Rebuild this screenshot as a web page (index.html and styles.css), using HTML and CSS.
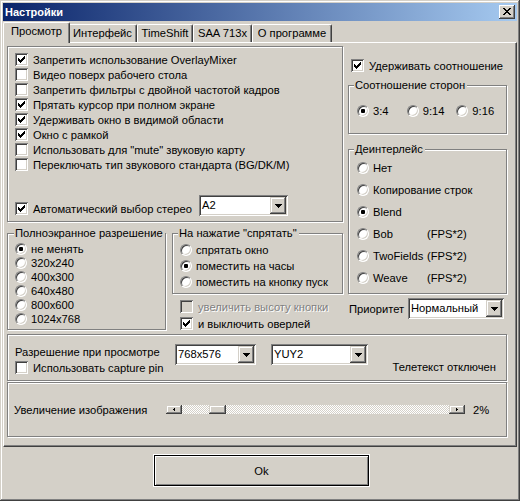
FILE: index.html
```html
<!DOCTYPE html>
<html>
<head>
<meta charset="utf-8">
<title>Настройки</title>
<link rel="stylesheet" href="styles.css">
</head>
<body>
<div class="win">
  <div class="titlebar">
    <span class="title">Настройки</span>
    <span class="closebtn"><svg width="8" height="7" viewBox="0 0 8 7" shape-rendering="crispEdges"><path d="M0 0h2v1h-2z M6 0h2v1h-2z M1 1h2v1h-2z M5 1h2v1h-2z M2 2h4v1h-4z M3 3h2v1h-2z M2 4h4v1h-4z M1 5h2v1h-2z M5 5h2v1h-2z M0 6h2v1h-2z M6 6h2v1h-2z"/></svg></span>
  </div>
  <div class="tabs">
    <div class="tab sel t1">Просмотр</div>
    <div class="tab t2">Интерфейс</div>
    <div class="tab t3">TimeShift</div>
    <div class="tab t4">SAA 713x</div>
    <div class="tab t5">О программе</div>
  </div>
  <div class="panel">
    <div class="top">
      <div class="lcol">
        <div class="group g-main">
          <div class="row"><span class="cb"><svg width="7" height="7" viewBox="0 0 7 7" shape-rendering="crispEdges"><path d="M6 0h1v1h-1z M5 1h2v1h-2z M0 2h1v1h-1z M4 2h3v1h-3z M0 3h2v1h-2z M3 3h3v1h-3z M0 4h5v1h-5z M1 5h3v1h-3z M2 6h1v1h-1z"/></svg></span><span>Запретить использование OverlayMixer</span></div>
          <div class="row"><span class="cb"></span><span>Видео поверх рабочего стола</span></div>
          <div class="row"><span class="cb"></span><span>Запретить фильтры с двойной частотой кадров</span></div>
          <div class="row"><span class="cb"><svg width="7" height="7" viewBox="0 0 7 7" shape-rendering="crispEdges"><path d="M6 0h1v1h-1z M5 1h2v1h-2z M0 2h1v1h-1z M4 2h3v1h-3z M0 3h2v1h-2z M3 3h3v1h-3z M0 4h5v1h-5z M1 5h3v1h-3z M2 6h1v1h-1z"/></svg></span><span>Прятать курсор при полном экране</span></div>
          <div class="row"><span class="cb"><svg width="7" height="7" viewBox="0 0 7 7" shape-rendering="crispEdges"><path d="M6 0h1v1h-1z M5 1h2v1h-2z M0 2h1v1h-1z M4 2h3v1h-3z M0 3h2v1h-2z M3 3h3v1h-3z M0 4h5v1h-5z M1 5h3v1h-3z M2 6h1v1h-1z"/></svg></span><span>Удерживать окно в видимой области</span></div>
          <div class="row"><span class="cb"><svg width="7" height="7" viewBox="0 0 7 7" shape-rendering="crispEdges"><path d="M6 0h1v1h-1z M5 1h2v1h-2z M0 2h1v1h-1z M4 2h3v1h-3z M0 3h2v1h-2z M3 3h3v1h-3z M0 4h5v1h-5z M1 5h3v1h-3z M2 6h1v1h-1z"/></svg></span><span>Окно с рамкой</span></div>
          <div class="row"><span class="cb"></span><span>Использовать для "mute" звуковую карту</span></div>
          <div class="row"><span class="cb"></span><span>Переключать тип звукового стандарта (BG/DK/M)</span></div>
          <div class="stereo">
            <div class="row st-lbl"><span class="cb"><svg width="7" height="7" viewBox="0 0 7 7" shape-rendering="crispEdges"><path d="M6 0h1v1h-1z M5 1h2v1h-2z M0 2h1v1h-1z M4 2h3v1h-3z M0 3h2v1h-2z M3 3h3v1h-3z M0 4h5v1h-5z M1 5h3v1h-3z M2 6h1v1h-1z"/></svg></span><span>Автоматический выбор стерео</span></div>
            <div class="combo c-a2"><span class="ct">A2</span><span class="dd"><svg width="7" height="4" viewBox="0 0 7 4" shape-rendering="crispEdges"><path d="M0 0h7v1h-7z M1 1h5v1h-5z M2 2h3v1h-3z M3 3h1v1h-1z"/></svg></span></div>
          </div>
        </div>
        <div class="lower">
          <div class="group g-full">
            <span class="legend lg8">Полноэкранное разрешение</span>
            <div class="rrow"><span class="rb on"></span><span>не менять</span></div>
            <div class="rrow"><span class="rb"></span><span>320x240</span></div>
            <div class="rrow"><span class="rb"></span><span>400x300</span></div>
            <div class="rrow"><span class="rb"></span><span>640x480</span></div>
            <div class="rrow"><span class="rb"></span><span>800x600</span></div>
            <div class="rrow"><span class="rb"></span><span>1024x768</span></div>
          </div>
          <div class="subcol">
            <div class="group g-hide">
              <span class="legend">На нажатие "спрятать"</span>
              <div class="rrow h16"><span class="rb"></span><span>спрятать окно</span></div>
              <div class="rrow h16"><span class="rb on"></span><span>поместить на часы</span></div>
              <div class="rrow h16"><span class="rb"></span><span>поместить на кнопку пуск</span></div>
            </div>
            <div class="row sub-row first dis"><span class="cb off"></span><span>увеличить высоту кнопки</span></div>
            <div class="row sub-row"><span class="cb"><svg width="7" height="7" viewBox="0 0 7 7" shape-rendering="crispEdges"><path d="M6 0h1v1h-1z M5 1h2v1h-2z M0 2h1v1h-1z M4 2h3v1h-3z M0 3h2v1h-2z M3 3h3v1h-3z M0 4h5v1h-5z M1 5h3v1h-3z M2 6h1v1h-1z"/></svg></span><span>и выключить оверлей</span></div>
          </div>
        </div>
      </div>
      <div class="rcol">
        <div class="row keep"><span class="cb"><svg width="7" height="7" viewBox="0 0 7 7" shape-rendering="crispEdges"><path d="M6 0h1v1h-1z M5 1h2v1h-2z M0 2h1v1h-1z M4 2h3v1h-3z M0 3h2v1h-2z M3 3h3v1h-3z M0 4h5v1h-5z M1 5h3v1h-3z M2 6h1v1h-1z"/></svg></span><span>Удерживать соотношение</span></div>
        <div class="group g-aspect">
          <span class="legend">Соотношение сторон</span>
          <div class="hrow">
            <div class="rrow hitem"><span class="rb on"></span><span>3:4</span></div>
            <div class="rrow hitem"><span class="rb"></span><span>9:14</span></div>
            <div class="rrow hitem"><span class="rb"></span><span>9:16</span></div>
          </div>
        </div>
        <div class="group g-deint">
          <span class="legend">Деинтерлейс</span>
          <div class="rrow h22"><span class="rb"></span><span>Нет</span></div>
          <div class="rrow h22"><span class="rb"></span><span>Копирование строк</span></div>
          <div class="rrow h22"><span class="rb on"></span><span>Blend</span></div>
          <div class="rrow h22"><span class="rb"></span><span class="nm">Bob</span><span>(FPS*2)</span></div>
          <div class="rrow h22"><span class="rb"></span><span class="nm">TwoFields</span><span>(FPS*2)</span></div>
          <div class="rrow h22"><span class="rb"></span><span class="nm">Weave</span><span>(FPS*2)</span></div>
        </div>
        <div class="prio">
          <span class="prio-lbl">Приоритет</span>
          <div class="combo c-prio"><span class="ct">Нормальный</span><span class="dd"><svg width="7" height="4" viewBox="0 0 7 4" shape-rendering="crispEdges"><path d="M0 0h7v1h-7z M1 1h5v1h-5z M2 2h3v1h-3z M3 3h1v1h-1z"/></svg></span></div>
        </div>
      </div>
    </div>
    <div class="group g-res">
      <div class="rescol">
        <div class="line">Разрешение при просмотре</div>
        <div class="row"><span class="cb"></span><span>Использовать capture pin</span></div>
      </div>
      <div class="combo c-res"><span class="ct">768x576</span><span class="dd"><svg width="7" height="4" viewBox="0 0 7 4" shape-rendering="crispEdges"><path d="M0 0h7v1h-7z M1 1h5v1h-5z M2 2h3v1h-3z M3 3h1v1h-1z"/></svg></span></div>
      <div class="combo c-fmt"><span class="ct">YUY2</span><span class="dd"><svg width="7" height="4" viewBox="0 0 7 4" shape-rendering="crispEdges"><path d="M0 0h7v1h-7z M1 1h5v1h-5z M2 2h3v1h-3z M3 3h1v1h-1z"/></svg></span></div>
      <div class="line teletext">Телетекст отключен</div>
    </div>
    <div class="group g-zoom">
      <div class="zrow">
        <span class="zlbl">Увеличение изображения</span>
        <div class="sb">
          <span class="sbbtn"><svg width="2" height="3" viewBox="0 0 2 3" shape-rendering="crispEdges"><path d="M1 0h1v3h-1z M0 1h1v1h-1z"/></svg></span>
          <span class="sbtrack"><span class="thumb"></span></span>
          <span class="sbbtn"><svg width="2" height="3" viewBox="0 0 2 3" shape-rendering="crispEdges"><path d="M0 0h1v3h-1z M1 1h1v1h-1z"/></svg></span>
        </div>
        <span class="pct">2%</span>
      </div>
    </div>
  </div>
  <div class="btnrow"><button class="okbtn">Ok</button></div>
</div>
</body>
</html>
```
FILE: styles.css
```css
html, body {
  margin: 0;
  padding: 0;
  background: #d4d0c8;
}
body {
  font-family: "Liberation Sans", Arial, sans-serif;
  font-size: 11.2px;
  color: #000;
}
.win {
  width: 520px;
  height: 501px;
  box-sizing: border-box;
  padding: 3px;
  background: #d4d0c8;
  box-shadow: inset -1px -1px 0 #404040, inset 1px 1px 0 #d4d0c8, inset -2px -2px 0 #808080, inset 2px 2px 0 #fff;
}
.titlebar {
  height: 18px;
  display: flex;
  align-items: center;
  justify-content: space-between;
  padding: 0 2px 0 2px;
  background: linear-gradient(to right, #0a246a, #a6caf0);
}
.title {
  color: #fff;
  font-weight: bold;
  font-size: 11px;
}
.closebtn {
  width: 16px;
  height: 14px;
  box-sizing: border-box;
  display: flex;
  align-items: center;
  justify-content: center;
  padding: 0 1px 1px 0;
  background: #d4d0c8;
  box-shadow: inset -1px -1px 0 #404040, inset 1px 1px 0 #fff, inset -2px -2px 0 #808080;
}
.tabs {
  display: flex;
  align-items: flex-end;
  height: 20px;
  margin-top: 1px;
  padding-left: 2px;
}
.tab {
  box-sizing: border-box;
  height: 18px;
  line-height: 16px;
  text-align: center;
  border-left: 1px solid #fff;
  border-top: 1px solid #fff;
  border-right: 1px solid #404040;
  border-radius: 2px 2px 0 0;
  box-shadow: inset -1px 0 0 #808080;
  background: #d4d0c8;
  white-space: nowrap;
}
.t1 { width: 63px; }
.t2 { width: 69px; }
.t3 { width: 56px; }
.t4 { width: 59px; }
.t5 { width: 80px; }
.tab.sel {
  width: 67px;
  height: 21px;
  line-height: 17px;
  margin: 0 -2px -1px -2px;
  position: relative;
  z-index: 2;
}
.panel {
  height: 405px;
  box-sizing: border-box;
  border-left: 1px solid #fff;
  border-top: 1px solid #fff;
  border-right: 1px solid #404040;
  border-bottom: 1px solid #404040;
  box-shadow: inset -1px -1px 0 #808080;
  padding: 3px 0 0 3px;
}
.top {
  display: flex;
  gap: 5px;
  height: 288px;
}
.lcol { width: 336px; }
.rcol { width: 159px; }
.group {
  position: relative;
  box-sizing: border-box;
  border: 1px solid #808080;
  box-shadow: inset 1px 1px 0 #fff, 1px 1px 0 #fff;
}
.legend {
  position: absolute;
  top: -8px;
  left: 5px;
  line-height: 14px;
  padding: 0 2px 0 1px;
  background: #d4d0c8;
  white-space: nowrap;
}
.legend.lg8 { left: 6px; }
.row {
  display: flex;
  align-items: center;
  height: 15px;
  white-space: nowrap;
}
.cb {
  flex: none;
  width: 13px;
  height: 13px;
  box-sizing: border-box;
  margin-right: 5px;
  display: flex;
  align-items: center;
  justify-content: center;
  background: #fff;
  box-shadow: inset 1px 1px 0 #808080, inset -1px -1px 0 #fff, inset 2px 2px 0 #404040, inset -2px -2px 0 #d4d0c8;
}
.cb.off { background: #d4d0c8; }
.dis { color: #808080; text-shadow: 1px 1px 0 #fff; }
.rrow {
  display: flex;
  align-items: center;
  height: 14px;
  white-space: nowrap;
}
.h16 { height: 16px; }
.h22 { height: 22px; }
.rb {
  flex: none;
  width: 12px;
  height: 12px;
  box-sizing: border-box;
  margin-right: 4px;
  border-radius: 50%;
  border: 1px solid;
  border-color: #808080 #fff #fff #808080;
  box-shadow: inset 1px 1px 0 #404040, inset -1px -1px 0 #d4d0c8;
  background: #fff;
  display: flex;
  align-items: center;
  justify-content: center;
}
.rb.on::after {
  content: "";
  width: 4px;
  height: 4px;
  border-radius: 1px;
  background: #000;
}
.g-main {
  height: 176px;
  padding: 5px 0 0 7px;
}
.stereo {
  display: flex;
  align-items: flex-start;
  margin-top: 23px;
}
.st-lbl {
  width: 184px;
  margin-top: 6px;
}
.combo {
  flex: none;
  display: flex;
  height: 21px;
  box-sizing: border-box;
  padding: 2px;
  background: #fff;
  box-shadow: inset 1px 1px 0 #808080, inset -1px -1px 0 #fff, inset 2px 2px 0 #404040, inset -2px -2px 0 #d4d0c8;
}
.combo .ct {
  flex: 1;
  padding-left: 1px;
  line-height: 17px;
  white-space: nowrap;
  overflow: hidden;
}
.combo .dd {
  flex: none;
  width: 16px;
  height: 17px;
  display: flex;
  align-items: center;
  justify-content: center;
  background: #d4d0c8;
  box-shadow: inset -1px -1px 0 #404040, inset 1px 1px 0 #d4d0c8, inset -2px -2px 0 #808080, inset 2px 2px 0 #fff;
}
.c-a2 { width: 89px; }
.c-prio { width: 96px; margin-left: auto; margin-right: 3px; }
.c-res { width: 81px; }
.c-fmt { width: 97px; margin-left: 15px; }
.lower {
  display: flex;
  gap: 6px;
  margin-top: 11px;
}
.g-full {
  width: 159px;
  height: 97px;
  padding: 8px 0 0 7px;
}
.subcol { width: 171px; }
.g-hide {
  height: 61px;
  padding: 8px 0 0 7px;
}
.sub-row {
  height: 17px;
  margin-left: 8px;
}
.sub-row.first { margin-top: 4px; }
.keep {
  margin: 12px 0 0 3px;
}
.g-aspect {
  margin-top: 12px;
  height: 49px;
  padding: 18px 0 0 8px;
}
.hrow { display: flex; }
.hitem { width: 50px; }
.g-deint {
  margin-top: 15px;
  height: 145px;
  padding: 7px 0 0 8px;
}
.nm { width: 54px; }
.prio {
  display: flex;
  align-items: center;
  margin-top: 4px;
  height: 21px;
}
.prio-lbl { padding-left: 1px; }
.g-res {
  width: 500px;
  height: 47px;
  display: flex;
  align-items: flex-start;
  padding: 9px 10px 0 7px;
}
.rescol {
  width: 160px;
  padding-top: 1px;
}
.line {
  line-height: 15px;
  white-space: nowrap;
}
.teletext {
  margin-left: auto;
  margin-top: 16px;
}
.g-zoom {
  width: 500px;
  height: 55px;
  margin-top: 1px;
  padding: 19px 0 0 6px;
}
.zrow {
  display: flex;
  align-items: center;
  height: 15px;
}
.zlbl {
  width: 152px;
  white-space: nowrap;
}
.sb {
  display: flex;
  width: 299px;
  height: 9px;
}
.sbbtn {
  flex: none;
  width: 16px;
  height: 9px;
  display: flex;
  align-items: center;
  justify-content: center;
  background: #d4d0c8;
  box-shadow: inset -1px -1px 0 #404040, inset 1px 1px 0 #d4d0c8, inset -2px -2px 0 #808080, inset 2px 2px 0 #fff;
}
.sbtrack {
  flex: 1;
  display: flex;
  background-color: #fff;
  background-image: repeating-conic-gradient(#d4d0c8 0 25%, #fff 0 50%);
  background-size: 2px 2px;
}
.thumb {
  width: 17px;
  height: 9px;
  margin-left: 27px;
  background: #d4d0c8;
  box-shadow: inset -1px -1px 0 #404040, inset 1px 1px 0 #d4d0c8, inset -2px -2px 0 #808080, inset 2px 2px 0 #fff;
}
.pct {
  margin-left: 8px;
}
.btnrow {
  padding: 8px 0 0 151px;
}
.okbtn {
  display: block;
  width: 215px;
  height: 31px;
  box-sizing: border-box;
  margin: 0;
  padding: 0;
  font-family: "Liberation Sans", Arial, sans-serif;
  font-size: 11.2px;
  color: #000;
  background: #d4d0c8;
  border: 1px solid #000;
  box-shadow: 0 0 0 1px #fff, inset 1px 1px 0 #fff, inset -1px -1px 0 #808080;
}
```
